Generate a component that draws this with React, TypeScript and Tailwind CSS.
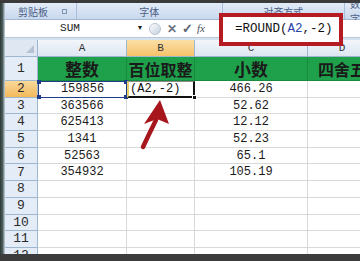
import React from 'react';

const mono = "font-['Liberation_Mono','DejaVu_Sans_Mono',monospace]";
const cjk = "font-['Noto_Sans_CJK_SC',sans-serif]";

const ints = ['159856', '363566', '625413', '1341', '52563', '354932'];
const decs = ['466.26', '52.62', '12.12', '52.23', '65.1', '105.19'];

function RowHead({ n, active }: { n: number; active?: boolean }) {
  return (
    <div
      className={`w-[33px] shrink-0 flex items-center justify-center border-r border-b border-[#9eb6ce] text-[13px] text-[#2b2b2b] ${mono} ${
        active ? 'bg-gradient-to-b from-[#f9d99a] to-[#f3b95a]' : 'bg-[#e4ecf7]'
      }`}
    >
      {n}
    </div>
  );
}

function Cell({ w, children, className = '' }: { w: string; children?: React.ReactNode; className?: string }) {
  return (
    <div className={`${w} shrink-0 flex items-center justify-center border-r border-b border-[#d9d9d9] bg-white text-[12px] text-[#1b1b1b] ${mono} ${className}`}>
      {children}
    </div>
  );
}

export default function App() {
  const rows = Array.from({ length: 11 }, (_, i) => i + 2);

  return (
    <div className="relative w-[360px] h-[261px] overflow-hidden bg-[#3a3a3a] flex flex-col">
      <div className="h-[3px] shrink-0 bg-[#3b3b3b]" />
      <div className="flex flex-1 min-h-0">
        <div className="w-[5px] shrink-0 bg-gradient-to-r from-[#2c3835] via-[#4b5c5a] to-[#c9d6e4]" />
        <div className="flex-1 flex flex-col min-w-0 overflow-hidden bg-white">
          {/* ribbon group labels */}
          <div className="h-[17px] shrink-0 flex bg-gradient-to-b from-[#e3ecf8] to-[#c8d8ed] border-b border-[#9fb5d0] text-[10px] text-[#4a5d85]">
            <div className={`w-[72px] flex items-center pl-[13px] gap-[14px] border-r border-[#a9bed8] ${cjk}`}>
              <span>剪贴板</span>
              <span className="w-[5px] h-[5px] border border-[#7f93b3]" />
            </div>
            <div className={`w-[147px] flex items-center justify-center border-r border-[#a9bed8] ${cjk}`}>字体</div>
            <div className={`w-[123px] flex items-center justify-center border-r border-[#a9bed8] ${cjk}`}>对齐方式</div>
            <div className={`flex-1 flex items-center pl-[5px] ${cjk}`}>数字</div>
          </div>
          {/* formula bar */}
          <div className="h-[18px] shrink-0 flex items-center bg-white border-b border-[#b9c9dd]">
            <div className={`w-[130px] text-center text-[11px] text-[#222] ${mono}`}>SUM</div>
            <div className="w-[10px] flex justify-center text-[7px] text-[#222]">▼</div>
            <div className="w-[12px] h-[12px] ml-[4px] rounded-full bg-gradient-to-br from-white to-[#c4cfdc] border border-[#b7c3d3]" />
            <div className="ml-[6px] text-[12px] font-bold text-[#6b7482] leading-none">✕</div>
            <div className="ml-[5px] text-[13px] font-bold text-[#5b6572] leading-none">✓</div>
            <div className="ml-[4px] text-[11px] italic text-[#4a5160] font-['Liberation_Serif',serif]">fx</div>
          </div>
          <div className="h-[2px] shrink-0 bg-[#d7e2ef]" />
          {/* column headers */}
          <div className={`h-[17px] shrink-0 flex text-[11px] text-[#333] ${mono}`}>
            <div className="w-[33px] shrink-0 relative bg-[#dfe7f2] border-r border-b border-[#9eb6ce]">
              <div className="absolute right-[3px] bottom-[3px] w-0 h-0 border-l-[8px] border-l-transparent border-b-[8px] border-b-[#b4c2d4]" />
            </div>
            <div className="w-[89px] shrink-0 flex items-center justify-center bg-gradient-to-b from-[#f3f6fb] to-[#dde6f1] border-r border-b border-[#9eb6ce]">A</div>
            <div className="w-[68px] shrink-0 flex items-center justify-center bg-gradient-to-b from-[#fbe0a6] to-[#f6c26a] border-r border-b border-[#9eb6ce]">B</div>
            <div className="w-[113px] shrink-0 flex items-center justify-center bg-gradient-to-b from-[#f3f6fb] to-[#dde6f1] border-r border-b border-[#9eb6ce]">C</div>
            <div className="w-[68px] shrink-0 flex items-center justify-center bg-gradient-to-b from-[#f3f6fb] to-[#dde6f1] border-b border-[#9eb6ce]">D</div>
          </div>
          {/* row 1 */}
          <div className="h-[24px] shrink-0 flex">
            <div className={`w-[33px] shrink-0 flex items-end justify-center pb-[2px] bg-[#e4ecf7] border-r border-b border-[#9eb6ce] text-[13px] text-[#2b2b2b] ${mono}`}>1</div>
            <div className={`w-[89px] shrink-0 flex items-center justify-center bg-[#1fa04b] border-r border-b border-[#1a8a40] text-[17px] font-bold text-[#1a1a1a] ${cjk}`}>整数</div>
            <div className={`w-[68px] shrink-0 flex items-center justify-center bg-[#1fa04b] border-r border-b border-[#1a8a40] text-[16px] font-bold text-[#1a1a1a] whitespace-nowrap ${cjk}`}>百位取整</div>
            <div className={`w-[113px] shrink-0 flex items-center justify-center bg-[#1fa04b] border-r border-b border-[#1a8a40] text-[17px] font-bold text-[#1a1a1a] ${cjk}`}>小数</div>
            <div className={`w-[80px] shrink-0 flex items-center pl-[10px] bg-[#1fa04b] border-b border-[#1a8a40] text-[16px] font-bold text-[#1a1a1a] whitespace-nowrap overflow-hidden ${cjk}`}>四舍五入</div>
          </div>
          {/* data rows */}
          {rows.map((n) => (
            <div key={n} className="h-[16.7px] shrink-0 flex">
              <RowHead n={n} active={n === 2} />
              {n === 2 ? (
                <>
                  <div className={`relative w-[89px] shrink-0 flex items-center justify-center bg-white border border-[#1f3c88] text-[12px] text-[#1b1b1b] ${mono}`}>
                    {ints[0]}
                    <span className="absolute -left-[2px] -top-[2px] w-[4px] h-[4px] bg-[#1f3c88]" />
                    <span className="absolute -left-[2px] -bottom-[2px] w-[4px] h-[4px] bg-[#1f3c88]" />
                    <span className="absolute -right-[2px] -top-[2px] w-[4px] h-[4px] bg-[#1f3c88]" />
                    <span className="absolute -right-[2px] -bottom-[2px] w-[4px] h-[4px] bg-[#1f3c88]" />
                  </div>
                  <div className={`relative w-[68px] shrink-0 flex items-center pl-[1px] bg-white border-l-2 border-l-[#e9cf6a] border-t border-t-[#8a8a8a] border-r-2 border-r-[#111] border-b-2 border-b-[#111] text-[12px] text-[#111] whitespace-nowrap ${mono}`}>
                    (A2,-2)
                    <span className="absolute -right-[4px] -bottom-[4px] w-[5px] h-[5px] bg-[#111] border border-white" />
                  </div>
                </>
              ) : (
                <>
                  <Cell w="w-[89px]">{ints[n - 2]}</Cell>
                  <Cell w="w-[68px]" />
                </>
              )}
              <Cell w="w-[113px]">{decs[n - 2]}</Cell>
              <div className="w-[80px] shrink-0 bg-white border-b border-[#d9d9d9]" />
            </div>
          ))}
        </div>
      </div>
      <div className="h-[7px] shrink-0 bg-[#3c3c3c]" />

      {/* red annotation box around the formula */}
      <div className={`absolute left-[219px] top-[13px] w-[124px] h-[33px] border-[4px] border-[#b51b22] bg-white flex items-center pl-[12px] text-[12.5px] text-[#111] whitespace-nowrap ${mono}`}>
        =ROUND(<span className="text-[#2a44a8]">A2</span>,-2)
      </div>

      {/* red arrow */}
      <svg className="absolute left-0 top-0" width="360" height="261" viewBox="0 0 360 261">
        <path d="M143 147 Q150 132 156 120" stroke="#a8161d" strokeWidth="4.5" fill="none" strokeLinecap="round" />
        <path d="M160 100 L169 124 L157 119 L144 124 Z" fill="#a8161d" />
      </svg>
    </div>
  );
}
